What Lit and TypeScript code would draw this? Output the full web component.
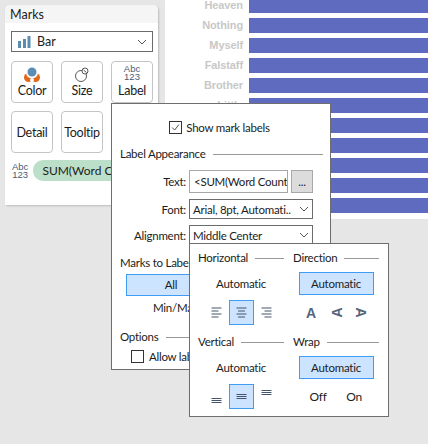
import { LitElement, html, css, svg } from "lit";
import { customElement } from "lit/decorators.js";

const chevron = html`<svg class="chev" width="10" height="6" viewBox="0 0 10 6"><path d="M1 1l4 4 4-4" fill="none" stroke="#555" stroke-width="1"/></svg>`;
const words = ["Heaven", "Nothing", "Myself", "Falstaff", "Brother", "Little", "", "", "", "", ""];

const hAlign = (kind: string) => {
  const rows = [10, 7, 10, 7];
  return html`<svg width="25" height="25" viewBox="0 0 25 25">${rows.map((w, i) => {
    const x1 = kind === "left" ? 7.5 : kind === "center" ? 12.5 - w / 2 : 17.5 - w;
    return svg`<line x1="${x1}" x2="${x1 + w}" y1="${8 + i * 3}" y2="${8 + i * 3}" stroke="#44546a" stroke-width="1"/>`;
  })}</svg>`;
};
const vAlign = (top: number) => html`<svg width="25" height="25" viewBox="0 0 25 25">${[0, 1, 2].map(
  (i) => svg`<line x1="7.5" x2="17.5" y1="${top + i * 2}" y2="${top + i * 2}" stroke="#44546a" stroke-width="1"/>`
)}</svg>`;

@customElement("app-root")
export class AppRoot extends LitElement {
  static styles = css`
    :host { display: block; position: relative; width: 428px; height: 444px; overflow: hidden; background: #e6e6e6; font-family: "Lato", "Open Sans", sans-serif; font-size: 11.5px; letter-spacing: -0.25px; color: #1c1c1c; }
    .top { display: flex; height: 219px; }
    .left { width: 165px; padding: 5px 0 0 5px; box-sizing: border-box; flex: none; }
    .card { width: 153px; height: 200px; background: #fff; border-radius: 5px 5px 0 0; box-shadow: 1px 1px 2px #bbb; display: flex; flex-direction: column; overflow: hidden; }
    .card-head { height: 18px; background: #f5f5f5; padding-left: 5px; line-height: 20px; font-size: 12.5px; letter-spacing: 0; flex: none; }
    .select { height: 21px; box-sizing: border-box; border: 1px solid #6b6b6b; background: #fff; display: flex; align-items: center; padding: 0 5px 0 6px; gap: 6px; }
    .chev { margin-left: auto; flex: none; }
    .marks-select { margin: 8px 5px 0 6px; font-size: 12.5px; letter-spacing: 0; }
    .tiles { display: grid; grid-template-columns: repeat(3, 42px); gap: 8px; margin: 9px 0 0 6px; font-size: 12.5px; }
    .tile { height: 42px; box-sizing: border-box; border: 1px solid #c4c4c4; border-radius: 4px; display: flex; flex-direction: column; align-items: center; justify-content: flex-end; padding-bottom: 4px; line-height: 15px; background: #fff; }
    .tile.plain { justify-content: center; padding-bottom: 0; }
    .abc { font-family: "Liberation Sans", sans-serif; font-size: 9.5px; letter-spacing: 0; line-height: 8px; color: #4b5b72; text-align: center; }
    .tile .label-word { margin-top: 2px; }
    .pill-row { display: flex; align-items: center; gap: 5px; margin: 7px 0 0 7px; white-space: nowrap; }
    .pill { background: #bcdfc9; border-radius: 10px; height: 21px; line-height: 21px; padding: 0 10px 0 9px; width: 120px; flex: none; font-size: 12px; letter-spacing: 0; }
    .chart { flex: 1; background: #fff; display: flex; flex-direction: column; gap: 5px; margin-top: -2px; height: 221px; }
    .row { display: flex; height: 15px; align-items: center; flex: none; }
    .word { width: 84px; padding-right: 6px; box-sizing: border-box; text-align: right; font: bold 11px "Liberation Sans", sans-serif; letter-spacing: -0.1px; color: #c8c8c8; flex: none; position: relative; top: -1px; }
    .bar { flex: 1; height: 15px; background: #5e6bbf; }
    .popup { position: absolute; background: #fff; border: 1px solid #6e6e6e; box-sizing: border-box; }
    .p1 { left: 111px; top: 103px; width: 220px; height: 267px; padding: 0 7px 0 8px; }
    .p2 { left: 189px; top: 243px; width: 200px; height: 174px; padding: 7px 0 0 8px; display: grid; grid-template-columns: 86px 86px; column-gap: 9px; align-content: start; }
    .check-row { display: flex; align-items: center; gap: 4px; }
    .top-check { justify-content: center; margin: 16px 0 0 0; height: 14px; padding-right: 4px; }
    .box { width: 13px; height: 13px; border: 1px solid #333; box-sizing: border-box; flex: none; display: block; }
    .head { display: flex; align-items: center; gap: 7px; height: 14px; line-height: 14px; white-space: nowrap; }
    .head::after { content: ""; flex: 1; height: 1px; background: #999; }
    .appearance { margin-top: 13px; }
    .form { display: grid; grid-template-columns: 69px 99px 25px; margin-top: 9px; align-items: center; row-gap: 6px; }
    .form label { text-align: right; padding-right: 3px; white-space: nowrap; }
    .input { height: 23px; box-sizing: border-box; border: 1px solid #a8a8a8; line-height: 21px; padding-left: 4px; overflow: hidden; white-space: nowrap; }
    .more { margin-left: 3px; width: 22px; height: 23px; box-sizing: border-box; border: 1px solid #a8a8a8; background: #dcdcdc; text-align: center; line-height: 21px; }
    .form .select { grid-column: 2 / 4; height: 20px; padding: 0 3px 0 3px; white-space: nowrap; overflow: hidden; }
    .marks-to { margin-top: 11px; height: 14px; line-height: 14px; }
    .all { margin: 4px 0 0 6px; height: 22px; width: 180px; box-sizing: border-box; background: #cce4ff; border: 1px solid #3f9cf0; text-align: center; line-height: 20px; padding-right: 90px; }
    .minmax { margin: 5px 0 0 33px; line-height: 14px; }
    .options { margin-top: 15px; }
    .allow { margin: 6px 0 0 11px; gap: 5px; white-space: nowrap; height: 13px; }
    .cell { display: flex; flex-direction: column; align-items: center; }
    .cell .head { width: 100%; box-sizing: border-box; }
    .cell:nth-child(n + 3) { margin-top: 10px; }
    .auto { width: 75px; height: 23px; box-sizing: border-box; margin-top: 7px; line-height: 21px; text-align: center; border: 1px solid transparent; }
    .icons { display: flex; margin-top: 5px; height: 25px; }
    .ic { width: 25px; height: 25px; box-sizing: border-box; display: flex; align-items: center; justify-content: center; border: 1px solid transparent; }
    .ic svg { flex: none; margin: -1px; display: block; }
    .auto.on, .ic.on { background: #cce4ff; border-color: #3f9cf0; }
    .dir { font: bold 14px "Liberation Sans", sans-serif; letter-spacing: 0; color: #55657c; }
    .ccw { transform: rotate(-90deg); }
    .cw { transform: rotate(90deg); }
    .txt { width: 36px; height: 25px; line-height: 25px; text-align: center; font-size: 12px; }
    svg { display: block; }
  `;

  render() {
    return html`
      <div class="top">
        <div class="left">
          <div class="card">
            <div class="card-head">Marks</div>
            <div class="select marks-select">
              <svg width="13" height="12" viewBox="0 0 13 12"><rect x="0" y="5" width="3" height="7" fill="#5a8db0"/><rect x="5" y="3" width="3" height="9" fill="#5a8db0"/><rect x="9.5" y="0" width="3" height="12" fill="#5a8db0"/></svg>
              <span>Bar</span>${chevron}
            </div>
            <div class="tiles">
              <div class="tile">
                <svg width="16" height="16" viewBox="0 0 16 16"><circle cx="4.5" cy="10.5" r="4.5" fill="#e2691c"/><circle cx="11.5" cy="10.5" r="4.5" fill="#e2691c"/><circle cx="8" cy="5.5" r="6" fill="#fff"/><circle cx="8" cy="13" r="2" fill="#fff"/><circle cx="8" cy="5" r="4.5" fill="#5b8db5"/></svg>
                <span>Color</span>
              </div>
              <div class="tile">
                <svg width="16" height="16" viewBox="0 0 16 16"><circle cx="7" cy="9" r="5.5" fill="none" stroke="#5a5a5a"/><circle cx="11" cy="4" r="3" fill="#fff" stroke="#5a5a5a"/><path d="M9.5 3l3 2.5" stroke="#5a5a5a"/></svg>
                <span>Size</span>
              </div>
              <div class="tile">
                <div class="abc">Abc<br />123</div>
                <span class="label-word">Label</span>
              </div>
              <div class="tile plain">Detail</div>
              <div class="tile plain">Tooltip</div>
            </div>
            <div class="pill-row">
              <div class="abc">Abc<br />123</div>
              <div class="pill">SUM(Word Count)</div>
            </div>
          </div>
        </div>
        <div class="chart">
          ${words.map((w) => html`<div class="row"><div class="word">${w}</div><div class="bar"></div></div>`)}
        </div>
      </div>

      <div class="popup p1">
        <div class="check-row top-check">
          <svg class="box" viewBox="0 0 13 13"><path d="M2.5 6.5l3 3 5-6.5" fill="none" stroke="#333" stroke-width="1"/></svg>
          <span>Show mark labels</span>
        </div>
        <div class="head appearance">Label Appearance</div>
        <div class="form">
          <label>Text:</label><div class="input">&lt;SUM(Word Count)&gt;</div><div class="more">...</div>
          <label>Font:</label><div class="select"><span>Arial, 8pt, Automati..</span>${chevron}</div>
          <label>Alignment:</label><div class="select"><span>Middle Center</span>${chevron}</div>
        </div>
        <div class="marks-to">Marks to Label</div>
        <div class="all">All</div>
        <div class="minmax">Min/Max</div>
        <div class="head options">Options</div>
        <div class="check-row allow"><span class="box"></span><span>Allow labels to overlap other marks</span></div>
      </div>

      <div class="popup p2">
        <div class="cell">
          <div class="head">Horizontal</div>
          <div class="auto">Automatic</div>
          <div class="icons">
            <div class="ic">${hAlign("left")}</div>
            <div class="ic on">${hAlign("center")}</div>
            <div class="ic">${hAlign("right")}</div>
          </div>
        </div>
        <div class="cell">
          <div class="head">Direction</div>
          <div class="auto on">Automatic</div>
          <div class="icons">
            <div class="ic dir">A</div>
            <div class="ic dir ccw">A</div>
            <div class="ic dir cw">A</div>
          </div>
        </div>
        <div class="cell">
          <div class="head">Vertical</div>
          <div class="auto">Automatic</div>
          <div class="icons">
            <div class="ic">${vAlign(14.5)}</div>
            <div class="ic on">${vAlign(10.5)}</div>
            <div class="ic">${vAlign(6.5)}</div>
          </div>
        </div>
        <div class="cell">
          <div class="head">Wrap</div>
          <div class="auto on">Automatic</div>
          <div class="icons">
            <div class="txt">Off</div>
            <div class="txt">On</div>
          </div>
        </div>
      </div>
    `;
  }
}
